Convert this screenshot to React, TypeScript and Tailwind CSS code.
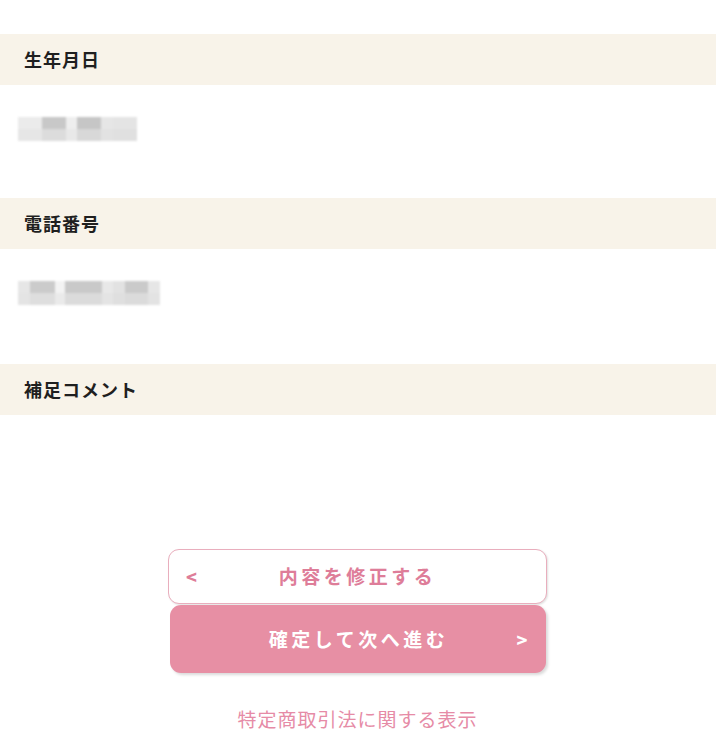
const font = { fontFamily: '"Noto Sans CJK JP", "Noto Sans", sans-serif' };

type Block = { w: number; top: string; bottom: string };

const birth: Block[] = [
  { w: 24, top: '#ebebeb', bottom: '#e6e6e6' },
  { w: 24, top: '#c8c8c8', bottom: '#dcdcdc' },
  { w: 11, top: '#eeeeee', bottom: '#e8e8e8' },
  { w: 24, top: '#c6c6c6', bottom: '#d8d8d8' },
  { w: 12, top: '#e6e6e6', bottom: '#e2e2e2' },
  { w: 24, top: '#e4e4e4', bottom: '#e0e0e0' },
];

const phone: Block[] = [
  { w: 12, top: '#e6e6e6', bottom: '#e4e4e4' },
  { w: 25, top: '#cbcbcb', bottom: '#dedede' },
  { w: 10, top: '#f3f3f3', bottom: '#eaeaea' },
  { w: 37, top: '#c9c9c9', bottom: '#dbdbdb' },
  { w: 11, top: '#e8e8e8', bottom: '#e4e4e4' },
  { w: 12, top: '#e2e2e2', bottom: '#dfdfdf' },
  { w: 23, top: '#cacaca', bottom: '#dbdbdb' },
  { w: 12, top: '#e6e6e6', bottom: '#e3e3e3' },
];

function Blurred({ blocks }: { blocks: Block[] }) {
  return (
    <div className="flex h-[24px] blur-[1px]">
      {blocks.map((b, i) => (
        <div key={i} className="flex flex-col" style={{ width: b.w }}>
          <div className="flex-1" style={{ backgroundColor: b.top }} />
          <div className="flex-1" style={{ backgroundColor: b.bottom }} />
        </div>
      ))}
    </div>
  );
}

function Label({ children }: { children: string }) {
  return (
    <div className="h-[51px] w-[716px] bg-[#f8f3e9] flex items-center pl-6">
      <h2 className="text-[18px] font-bold tracking-[1px] text-[#1f1f1f]">{children}</h2>
    </div>
  );
}

function App() {
  return (
    <div className="w-[720px] h-[749px] bg-white overflow-hidden pt-[34px]" style={font}>
      {/* 生年月日 */}
      <Label>生年月日</Label>
      <div className="pl-[18px] pt-[32px] pb-[57px]">
        <Blurred blocks={birth} />
      </div>

      {/* 電話番号 */}
      <Label>電話番号</Label>
      <div className="pl-[18px] pt-[32px] pb-[59px]">
        <Blurred blocks={phone} />
      </div>

      {/* 補足コメント */}
      <Label>補足コメント</Label>

      {/* ボタン */}
      <div className="flex flex-col items-center mt-[134px] pr-[5px]">
        <button className="w-[379px] h-[55px] rounded-[11px] border-[1.5px] border-[#e9aebd] bg-white shadow-[1px_1px_2px_rgba(0,0,0,0.12)] flex items-center px-[17px] text-[#de7d99]">
          <span className="text-[18px] font-black w-5 text-left">&lt;</span>
          <span className="flex-1 text-[19px] font-bold tracking-[3.5px] pr-5">内容を修正する</span>
        </button>
        <button className="mt-[1px] w-[376px] h-[68px] rounded-[11px] bg-[#e78fa4] shadow-[2px_2px_3px_rgba(0,0,0,0.15)] flex items-center pr-[18px] text-white">
          <span className="flex-1 text-[19px] font-bold tracking-[3.5px] pl-[40px]">確定して次へ進む</span>
          <span className="text-[18px] font-black w-5 text-right">&gt;</span>
        </button>
        <a className="mt-[32px] text-[19px] tracking-[1px] text-[#e68ba6]">特定商取引法に関する表示</a>
      </div>
    </div>
  );
}

export default App;
